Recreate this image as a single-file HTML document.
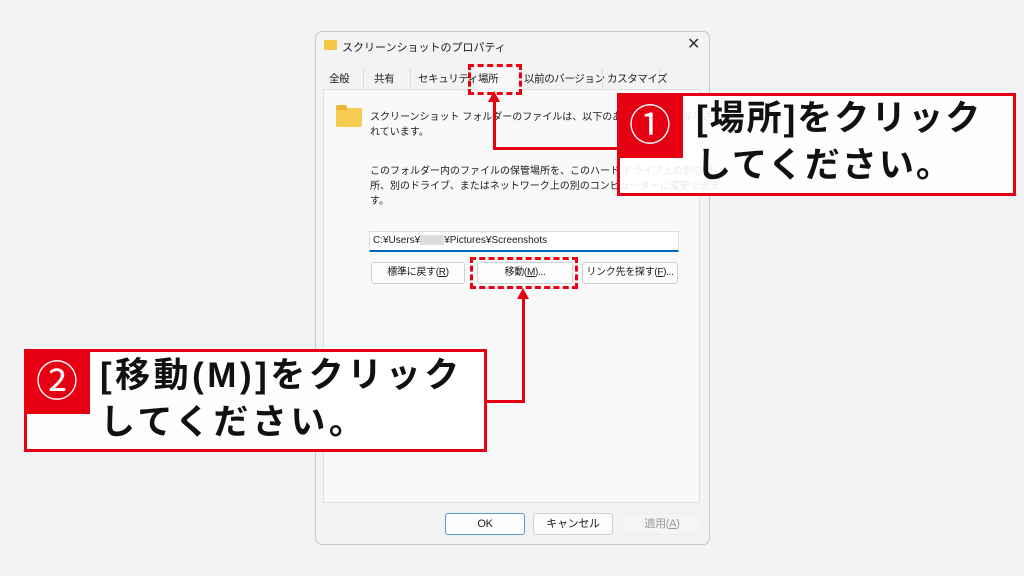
<!DOCTYPE html>
<html><head><meta charset="utf-8"><style>
*{margin:0;padding:0;box-sizing:border-box}
body{width:1024px;height:576px;background:#f3f3f3;position:relative;overflow:hidden;font-family:"Liberation Sans","Noto Sans CJK JP",sans-serif;color:#1a1a1a}
.a{position:absolute}
.dlg{left:315px;top:31px;width:395px;height:514px;border:1px solid #c8c8c8;border-radius:7px;background:#f3f3f3}
.panel{left:323px;top:89px;width:377px;height:414px;background:#f9f9f9;border:1px solid #e0e0e0}
.t{font-size:10px;white-space:nowrap}
.tab{top:68px;height:22px;font-size:10.5px;padding-top:3px;white-space:nowrap;letter-spacing:-0.4px}
.btn{height:22px;border:1px solid #d0d0d0;border-radius:3px;background:#fdfdfd;font-size:10px;text-align:center;line-height:20px;white-space:nowrap;letter-spacing:-0.3px}
.call{border:3px solid #e60012;background:rgba(255,255,255,0.9)}
.num{background:#e60012;color:#fff;font-size:42px;text-align:center}
.ct{font-size:35px;font-weight:bold;letter-spacing:2px;line-height:47px;color:#111;white-space:nowrap}
.red{background:#e60012}
</style></head><body>
<div class="a dlg"></div>
<div class="a" style="left:324px;top:40px;width:13px;height:10px;background:#f5c842;border-radius:1px"></div>
<div class="a t" style="left:342px;top:39px;font-size:11px">スクリーンショットのプロパティ</div>
<div class="a" style="left:687px;top:34px;font-size:16px;color:#333">✕</div>
<div class="a panel"></div>
<div class="a tab" style="left:324px;width:40px;border-right:1px solid #ddd;padding-left:5px">全般</div>
<div class="a tab" style="left:367px;width:44px;border-right:1px solid #ddd;padding-left:7px">共有</div>
<div class="a tab" style="left:418px">セキュリティ</div>
<div class="a tab" style="left:478px;width:40px;background:#f9f9f9">場所</div>
<div class="a tab" style="left:524px">以前のバージョン</div>
<div class="a tab" style="left:602px;width:58px;border-left:1px solid #ddd;border-right:1px solid #ddd;padding-left:4px">カスタマイズ</div>
<div class="a" style="left:468px;top:64px;width:54px;height:31px;border:3px dashed #e60012"></div>
<div class="a" style="left:336px;top:108px;width:26px;height:19px;background:#f6cb52;border-radius:2px"></div>
<div class="a" style="left:336px;top:105px;width:11px;height:5px;background:#e9b637;border-radius:2px 2px 0 0"></div>
<div class="a t" style="left:370px;top:110px;line-height:15px">スクリーンショット フォルダーのファイルは、以下のあて先の場所に保存さ<br>れています。</div>
<div class="a t" style="left:370px;top:164px;line-height:15px">このフォルダー内のファイルの保管場所を、このハード ドライブ上の別の場<br>所、別のドライブ、またはネットワーク上の別のコンピューターに変更できま<br>す。</div>
<div class="a" style="left:369px;top:231px;width:310px;height:21px;background:#fff;border:1px solid #ddd;border-bottom:2px solid #0067c0"></div>
<div class="a t" style="left:373px;top:235px">C:¥Users¥<span style="display:inline-block;width:24px;height:10px;background:#ddd;vertical-align:middle"></span>¥Pictures¥Screenshots</div>
<div class="a btn" style="left:371px;top:262px;width:94px">標準に戻す(<u>R</u>)</div>
<div class="a btn" style="left:477px;top:262px;width:96px">移動(<u>M</u>)...</div>
<div class="a btn" style="left:582px;top:262px;width:96px">リンク先を探す(<u>F</u>)...</div>
<div class="a" style="left:470px;top:257px;width:108px;height:32px;border:3px dashed #e60012"></div>
<div class="a btn" style="left:445px;top:513px;width:80px;border-color:#5a9bd8;font-size:11px">OK</div>
<div class="a btn" style="left:533px;top:513px;width:80px;font-size:11px">キャンセル</div>
<div class="a btn" style="left:622px;top:513px;width:80px;background:#f5f5f5;border-color:#eee;color:#999;font-size:11px">適用(<u>A</u>)</div>
<div class="a red" style="left:493px;top:100px;width:3px;height:50px"></div>
<div class="a red" style="left:493px;top:147px;width:126px;height:3px"></div>
<div class="a" style="left:488px;top:91px;width:0;height:0;border-left:6.5px solid transparent;border-right:6.5px solid transparent;border-bottom:11px solid #e60012"></div>
<div class="a red" style="left:522px;top:298px;width:3px;height:105px"></div>
<div class="a red" style="left:485px;top:400px;width:40px;height:3px"></div>
<div class="a" style="left:517px;top:288px;width:0;height:0;border-left:6.5px solid transparent;border-right:6.5px solid transparent;border-bottom:11px solid #e60012"></div>
<div class="a call" style="left:617px;top:93px;width:399px;height:103px"></div>
<div class="a num" style="left:617px;top:93px;width:66px;height:65px;line-height:65px">①</div>
<div class="a ct" style="left:696px;top:95px">[場所]をクリック<br>してください。</div>
<div class="a call" style="left:24px;top:349px;width:463px;height:103px"></div>
<div class="a num" style="left:24px;top:349px;width:66px;height:65px;line-height:65px">②</div>
<div class="a ct" style="left:100px;top:352px;letter-spacing:3.5px">[移動(M)]をクリック<br>してください。</div>
</body></html>
